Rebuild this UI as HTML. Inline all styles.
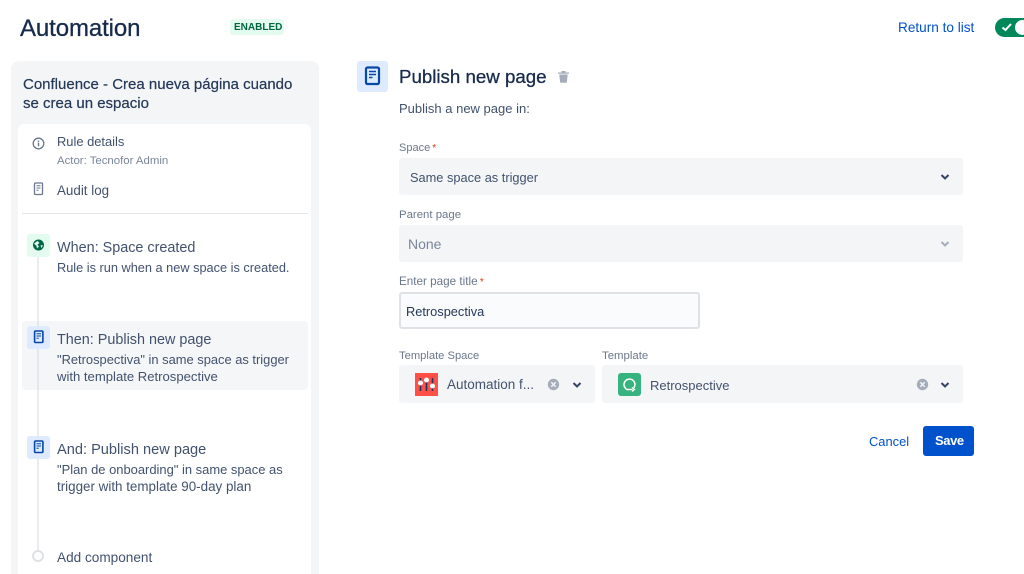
<!DOCTYPE html>
<html><head><meta charset="utf-8">
<style>
html,body{margin:0;padding:0;width:1024px;height:574px;overflow:hidden;background:#fff;font-family:"Liberation Sans",sans-serif;color:#42526e}
div,a,svg{position:absolute}
.t{white-space:nowrap;line-height:20px}
.m{-webkit-text-stroke:.3px currentColor}
.box{background:#f4f5f7;border-radius:3px}
.lb{font-size:11.4px;color:#6b778c;line-height:16px;white-space:nowrap}
.lb span{color:#de350b;font-size:10px;margin-left:-1px}
</style></head><body>

<div class="t m" style="left:20px;top:15px;font-size:24px;line-height:28px;color:#172b4d;letter-spacing:-.1px">Automation</div>
<div style="left:230px;top:19px;width:54px;height:16px;background:#e3fcef;border-radius:3px"></div>
<div class="t" style="left:234px;top:20px;font-size:10px;line-height:16px;font-weight:bold;color:#006644">ENABLED</div>
<div class="t" style="left:898px;top:18px;font-size:13.6px;color:#0052cc">Return to list</div>
<div style="left:995px;top:18px;width:40px;height:19px;background:#00875a;border-radius:10px"></div>
<div style="left:1015px;top:20px;width:15px;height:15px;background:#fff;border-radius:50%"></div>
<svg style="left:1000px;top:21px" width="14" height="12" viewBox="0 0 14 12"><path d="M2.5 6.5L5.5 9L11 3" fill="none" stroke="#fff" stroke-width="2"/></svg>

<!-- Sidebar -->
<div style="left:11px;top:61px;width:308px;height:513px;background:#f4f5f7;border-radius:8px 8px 0 0"></div>
<div class="t m" style="left:23px;top:75px;font-size:15px;color:#253858;line-height:19px;width:285px;white-space:normal;-webkit-text-stroke:.2px #253858">Confluence - Crea nueva página cuando<br>se crea un espacio</div>
<div style="left:18px;top:124px;width:293px;height:450px;background:#fff;border-radius:6px 6px 0 0"></div>

<svg style="left:31px;top:136px" width="15" height="15" viewBox="0 0 15 15"><circle cx="7.5" cy="7.5" r="5.3" fill="none" stroke="#6b778c" stroke-width="1.3"/><rect x="6.8" y="6.7" width="1.4" height="3.6" fill="#6b778c"/><rect x="6.8" y="4.5" width="1.4" height="1.4" fill="#6b778c"/></svg>
<div class="t" style="left:57px;top:132px;font-size:12.9px">Rule details</div>
<div class="t" style="left:57px;top:151px;font-size:11.4px;color:#7a869a">Actor: Tecnofor Admin</div>
<svg style="left:33px;top:182px" width="12" height="14" viewBox="0 0 12 14"><rect x="1.5" y="1" width="8" height="11.5" rx="1" fill="none" stroke="#6b778c" stroke-width="1.3"/><path d="M3.5 3.7h4M3.5 6h4M3.5 8.2h2" stroke="#6b778c"/></svg>
<div class="t" style="left:57px;top:181px;font-size:13.4px">Audit log</div>
<div style="left:22px;top:213px;width:286px;height:1px;background:#e4e6ec"></div>

<div style="left:37px;top:256px;width:2px;height:296px;background:#ebecf0"></div>

<div style="left:22px;top:321px;width:286px;height:69px;background:#f4f5f7;border-radius:4px;opacity:.95"></div>
<div style="left:37px;top:321px;width:2px;height:69px;background:#e6e7ec"></div>

<div style="left:27px;top:234px;width:23px;height:23px;background:#e3fcef;border-radius:3px"></div>
<svg style="left:31px;top:238px" width="15" height="15" viewBox="0 0 15 15"><circle cx="7.5" cy="7" r="5.5" fill="#006644"/><path d="M3 5.5L6.5 3L8.5 5L6.5 6.5L8 8.5L6 10.5L5.5 8ZM9.5 7.5L12 7L10.5 10Z" fill="#e3fcef"/></svg>
<div class="t" style="left:57px;top:238px;font-size:14.4px">When: Space created</div>
<div class="t" style="left:57px;top:258px;font-size:12.75px">Rule is run when a new space is created.</div>

<div style="left:27px;top:326px;width:23px;height:23px;background:#deebff;border-radius:3px"></div>
<svg style="left:33px;top:330px" width="12" height="14" viewBox="0 0 12 14"><rect x="1.6" y="1" width="8.3" height="11.5" rx="1" fill="#deebff" stroke="#0747a6" stroke-width="1.6"/><path d="M3.5 3.7h4.5M3.5 6h4.5M3.5 8.2h2.2" stroke="#0747a6"/></svg>
<div class="t" style="left:57px;top:330px;font-size:14.4px">Then: Publish new page</div>
<div class="t" style="left:57px;top:350px;font-size:12.9px">"Retrospectiva" in same space as trigger</div>
<div class="t" style="left:57px;top:367px;font-size:13.1px">with template Retrospective</div>

<div style="left:27px;top:436px;width:23px;height:23px;background:#deebff;border-radius:3px"></div>
<svg style="left:33px;top:440px" width="12" height="14" viewBox="0 0 12 14"><rect x="1.6" y="1" width="8.3" height="11.5" rx="1" fill="#deebff" stroke="#0747a6" stroke-width="1.6"/><path d="M3.5 3.7h4.5M3.5 6h4.5M3.5 8.2h2.2" stroke="#0747a6"/></svg>
<div class="t" style="left:57px;top:440px;font-size:14.6px">And: Publish new page</div>
<div class="t" style="left:57px;top:460px;font-size:12.95px">"Plan de onboarding" in same space as</div>
<div class="t" style="left:57px;top:477px;font-size:13.4px">trigger with template 90-day plan</div>

<div style="left:32px;top:550px;width:8px;height:8px;background:#fff;border:2px solid #dfe1e6;border-radius:50%"></div>
<div class="t" style="left:57px;top:548px;font-size:13.6px">Add component</div>

<!-- Main -->
<div style="left:357px;top:61px;width:31px;height:31px;background:#deebff;border-radius:3px"></div>
<svg style="left:364px;top:66px" width="17" height="20" viewBox="0 0 17 20"><rect x="2" y="1.5" width="13" height="16.5" rx="1.5" fill="none" stroke="#0747a6" stroke-width="2.2"/><path d="M5 5.5h7M5 8.5h7M5 11.5h3.5" stroke="#0747a6" stroke-width="1.6"/></svg>
<div class="t m" style="left:399px;top:65px;font-size:18.7px;line-height:24px;color:#172b4d">Publish new page</div>
<svg style="left:557px;top:70px" width="13" height="13" viewBox="0 0 13 13"><path d="M1 2.5h11v1.3H1zM4.5 1h4v1.5h-4zM2.3 4.5h8.4l-.8 7.5a.8.8 0 0 1-.8.7H3.9a.8.8 0 0 1-.8-.7z" fill="#a5adba"/></svg>
<div class="t" style="left:399px;top:99px;font-size:13px">Publish a new page in:</div>

<div class="lb" style="left:399px;top:140px;font-size:11px">Space <span>*</span></div>
<div class="box" style="left:399px;top:158px;width:564px;height:37px"></div>
<div class="t" style="left:410px;top:168px;font-size:12.8px">Same space as trigger</div>
<svg style="left:939px;top:171px" width="12" height="12" viewBox="0 0 12 12"><path d="M2.5 4L6 7.5L9.5 4" fill="none" stroke="#344563" stroke-width="2"/></svg>

<div class="lb" style="left:399px;top:207px">Parent page</div>
<div class="box" style="left:399px;top:225px;width:564px;height:37px"></div>
<div class="t" style="left:408px;top:234px;font-size:14px;color:#7a869a">None</div>
<svg style="left:939px;top:238px" width="12" height="12" viewBox="0 0 12 12"><path d="M2.5 4L6 7.5L9.5 4" fill="none" stroke="#a5adba" stroke-width="2"/></svg>

<div class="lb" style="left:399px;top:274px;font-size:11.7px">Enter page title <span>*</span></div>
<div style="left:399px;top:292px;width:297px;height:33px;background:#fafbfc;border:2px solid #dfe1e6;border-radius:3px"></div>
<div class="t" style="left:406px;top:302px;font-size:12.8px;color:#253858">Retrospectiva</div>

<div class="lb" style="left:399px;top:348px;font-size:11.2px">Template Space</div>
<div class="box" style="left:399px;top:365px;width:196px;height:38px"></div>
<div style="left:415px;top:373px;width:23px;height:23px;background:#ff5047"></div>
<svg style="left:415px;top:373px" width="23" height="23" viewBox="0 0 23 23"><path d="M5.5 5v13M11.5 5v13M17.5 5v13" stroke="#1d3461" stroke-width="1.6"/><circle cx="5.5" cy="10" r="2.5" fill="#fff"/><circle cx="11.5" cy="7" r="2.5" fill="#fff"/><circle cx="17.5" cy="13" r="2.5" fill="#fff"/></svg>
<div class="t" style="left:447px;top:375px;font-size:13.5px">Automation f...</div>
<svg style="left:547px;top:378px" width="13" height="13" viewBox="0 0 13 13"><circle cx="6.5" cy="6.5" r="5.7" fill="#a5adba"/><path d="M4.3 4.3l4.4 4.4M8.7 4.3l-4.4 4.4" stroke="#f4f5f7" stroke-width="1.4"/></svg>
<svg style="left:571px;top:379px" width="12" height="12" viewBox="0 0 12 12"><path d="M2.5 4L6 7.5L9.5 4" fill="none" stroke="#344563" stroke-width="2"/></svg>

<div class="lb" style="left:602px;top:348px">Template</div>
<div class="box" style="left:602px;top:365px;width:361px;height:38px"></div>
<div style="left:618px;top:373px;width:23px;height:23px;background:#36b37e;border-radius:3px"></div>
<svg style="left:618px;top:373px" width="23" height="23" viewBox="0 0 23 23"><path d="M14.5 16.5H9A5.5 5.5 0 1 1 17 11.5L16 15" fill="none" stroke="#fff" stroke-width="1.5"/><path d="M14 14.5L16.5 16.5L14 18.5" fill="none" stroke="#fff" stroke-width="1.2"/></svg>
<div class="t" style="left:650px;top:376px;font-size:13px">Retrospective</div>
<svg style="left:916px;top:378px" width="13" height="13" viewBox="0 0 13 13"><circle cx="6.5" cy="6.5" r="5.7" fill="#a5adba"/><path d="M4.3 4.3l4.4 4.4M8.7 4.3l-4.4 4.4" stroke="#f4f5f7" stroke-width="1.4"/></svg>
<svg style="left:939px;top:379px" width="12" height="12" viewBox="0 0 12 12"><path d="M2.5 4L6 7.5L9.5 4" fill="none" stroke="#344563" stroke-width="2"/></svg>

<div class="t" style="left:869px;top:432px;font-size:12.9px;color:#0052cc">Cancel</div>
<div style="left:923px;top:426px;width:51px;height:30px;background:#0052cc;border-radius:3px"></div>
<div class="t" style="left:935px;top:431px;font-size:13px;font-weight:bold;color:#fff;letter-spacing:-.4px">Save</div>

</body></html>
